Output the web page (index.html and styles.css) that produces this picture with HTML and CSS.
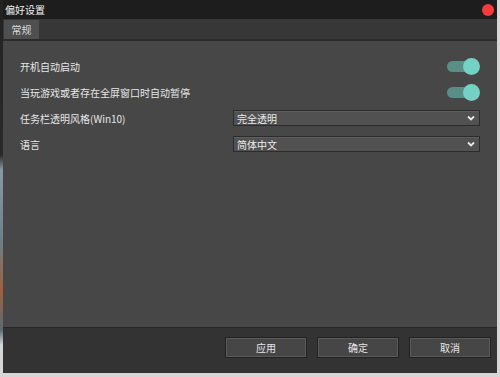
FILE: index.html
```html
<!DOCTYPE html>
<html>
<head>
  <title>偏好设置</title>
  <meta name="viewport" content="width=device-width, initial-scale=1.0">
  <link rel="stylesheet" href="styles.css">
</head>
<body>
  <div class="window">
    <div class="titlebar">
      <span class="title">偏好设置</span>
      <span class="close-dot"></span>
    </div>

    <div class="tabbar">
      <div class="tab active">常规</div>
    </div>

    <div class="content">
      <div class="row">
        <span class="label">开机自动启动</span>
        <div class="toggle on"><span class="track"></span><span class="knob"></span></div>
      </div>
      <div class="row">
        <span class="label">当玩游戏或者存在全屏窗口时自动暂停</span>
        <div class="toggle on"><span class="track"></span><span class="knob"></span></div>
      </div>
      <div class="row">
        <span class="label">任务栏透明风格(Win10)</span>
        <div class="select">
          <span>完全透明</span>
          <svg class="chevron" width="8" height="6" viewBox="0 0 8 6"><polyline points="1,1.5 4,4.5 7,1.5" fill="none" stroke="#e8e8e8" stroke-width="1.8"/></svg>
        </div>
      </div>
      <div class="row">
        <span class="label">语言</span>
        <div class="select">
          <span>简体中文</span>
          <svg class="chevron" width="8" height="6" viewBox="0 0 8 6"><polyline points="1,1.5 4,4.5 7,1.5" fill="none" stroke="#e8e8e8" stroke-width="1.8"/></svg>
        </div>
      </div>
    </div>

    <div class="footer">
      <button class="btn">应用</button>
      <button class="btn">确定</button>
      <button class="btn">取消</button>
    </div>
  </div>
</body>
</html>
```

FILE: styles.css
```css
body {
  margin: 0;
  padding: 0;
  width: 500px;
  height: 377px;
  overflow: hidden;
  font-family: "Noto Sans CJK SC", "Noto Sans", sans-serif;
  font-size: 10px;
  background:
    linear-gradient(to bottom, #222 0, #2a2a2a 155px, #8a9aa4 170px, #6d7f8a 240px, #a0603a 290px, #5a6a74 330px, #d6d6d6 345px) left top / 3px 100% no-repeat,
    #d6d6d6;
}

.window {
  margin-left: 3px;
  width: 494px;
  height: 373px;
  display: flex;
  flex-direction: column;
  background-color: #474747;
  color: #e6e6e6;
}

.titlebar {
  height: 19px;
  flex: none;
  background-color: #1d1d1d;
  display: flex;
  align-items: center;
  justify-content: space-between;
  padding: 0 3px 0 2px;
}

.title {
  color: #f2f2f2;
  font-size: 10px;
  line-height: 19px;
}

.close-dot {
  width: 12px;
  height: 12px;
  border-radius: 50%;
  background-color: #f53b3b;
}

.tabbar {
  height: 20px;
  flex: none;
  background-color: #373737;
  border-bottom: 2px solid #2b2b2b;
  display: flex;
  align-items: flex-end;
  padding-left: 1px;
}

.tab {
  width: 35px;
  height: 19px;
  line-height: 19px;
  text-align: center;
  color: #dcdcdc;
}

.tab.active {
  background-color: #4f4f4f;
}

.content {
  flex: 1;
  padding: 12px 17px 0 17px;
}

.row {
  height: 26px;
  display: flex;
  align-items: center;
  justify-content: space-between;
}

.label {
  color: #e6e6e6;
}

.toggle {
  position: relative;
  width: 33px;
  height: 17px;
}

.toggle .track {
  position: absolute;
  left: 0;
  top: 3px;
  width: 28px;
  height: 11px;
  border-radius: 6px;
  background-color: #5a8e87;
}

.toggle .knob {
  position: absolute;
  right: 0;
  top: 0;
  width: 17px;
  height: 17px;
  border-radius: 50%;
  background-color: #75d0c6;
}

.select {
  width: 247px;
  height: 16px;
  box-sizing: border-box;
  border: 1px solid #2c2c2c;
  background-color: #515151;
  box-shadow: inset 0 1px 0 #5e5e5e;
  display: flex;
  align-items: center;
  justify-content: space-between;
  padding: 0 4px 0 3px;
  color: #ececec;
}

.chevron {
  display: block;
}

.footer {
  height: 36px;
  flex: none;
  background-color: #333333;
  border-top: 1px solid #272727;
  display: flex;
  justify-content: flex-end;
  align-items: flex-start;
  gap: 10px;
  padding: 9px 6px 0 0;
}

.btn {
  width: 82px;
  height: 21px;
  margin: 0;
  padding: 0;
  font-family: inherit;
  font-size: 10px;
  color: #e6e6e6;
  background-color: #464646;
  border: 1px solid #222;
  box-shadow: inset 0 0 0 1px #5a5a5a;
  border-radius: 0;
}
```
